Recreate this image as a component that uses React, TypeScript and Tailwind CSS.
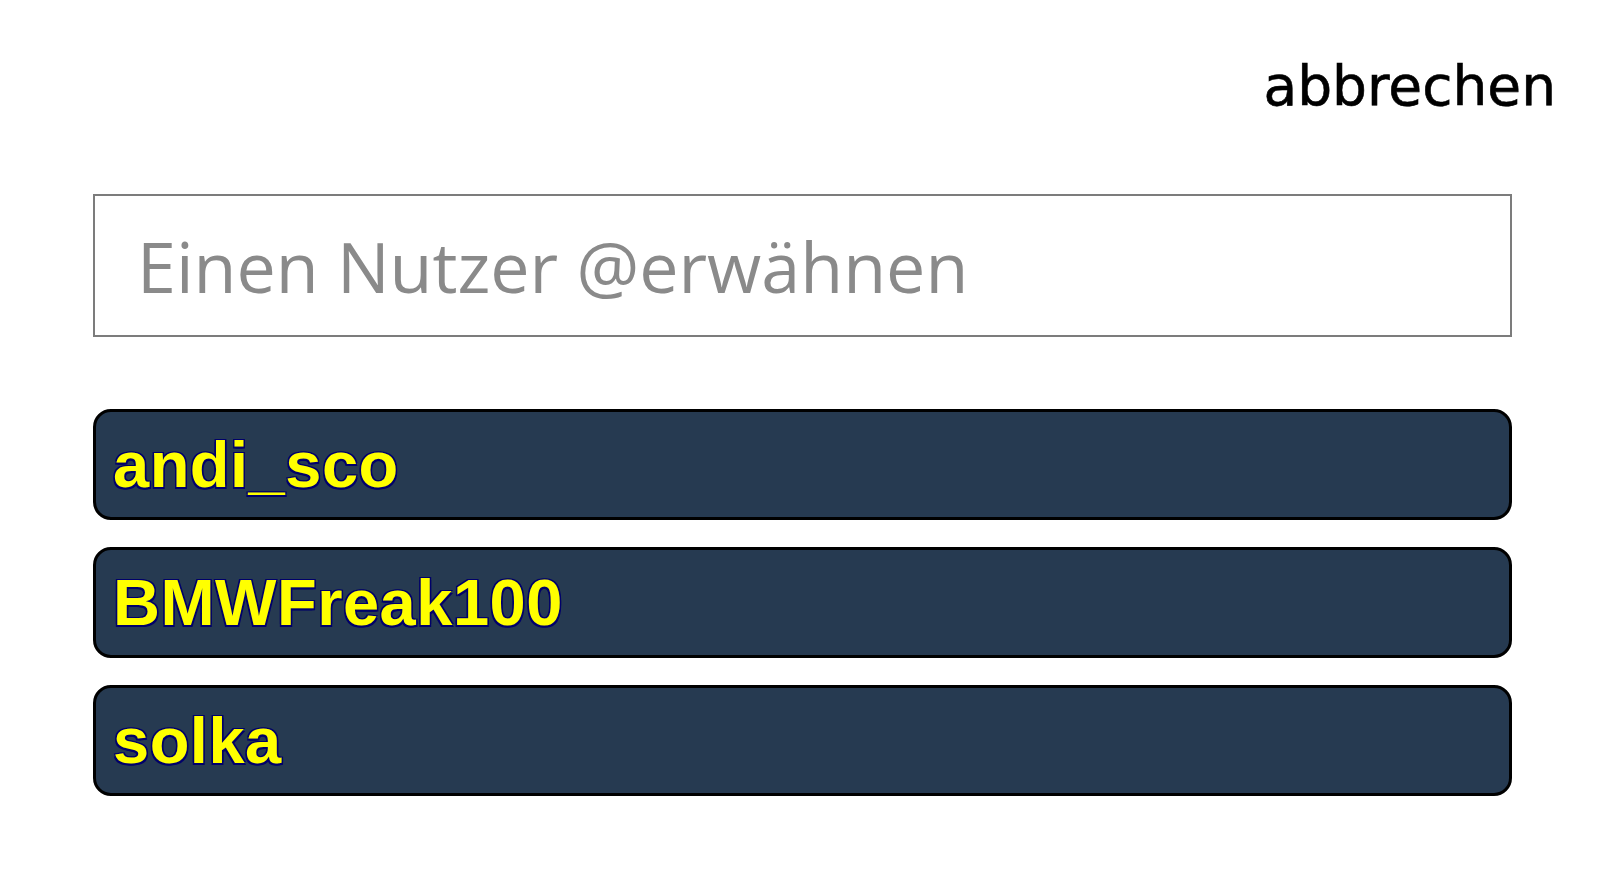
import { useState } from "react";

const USERS = ["andi_sco", "BMWFreak100", "solka"];

export default function App() {
  const [query, setQuery] = useState("");

  return (
    <div className="min-h-[875px] w-full bg-white">
      {/* cancel link */}
      <div className="flex justify-end pr-[44px] pt-[54px]">
        <button
          type="button"
          className="text-[55px] leading-[64px] text-black [-webkit-text-stroke:0.6px_#000]"
          style={{ fontFamily: '"DejaVu Sans", sans-serif' }}
        >
          abbrechen
        </button>
      </div>

      <div className="ml-[93px] mt-[76px] w-[1419px]">
        <input
          type="text"
          value={query}
          onChange={(e) => setQuery(e.target.value)}
          placeholder="Einen Nutzer @erwähnen"
          className="block h-[143px] w-full border-2 border-[#7c7c7c] bg-white px-[42px] text-[70px] text-[#555] outline-none placeholder:text-[#8a8a8a]"
          style={{ fontFamily: '"Open Sans", sans-serif', fontWeight: 500 }}
        />

        {/* suggestions */}
        <ul className="mt-[72px] flex flex-col gap-[27px]">
          {USERS.map((name) => (
            <li
              key={name}
              className="flex h-[111px] items-center rounded-[18px] border-[3px] border-black bg-[#263a51] pl-[17px] text-[65px] leading-none font-bold tracking-[0.5px] text-[#ffff00] [text-shadow:1.5px_1.5px_0_#00006a,-1.5px_-1.5px_0_#00006a,1.5px_-1.5px_0_#00006a,-1.5px_1.5px_0_#00006a,0_1.5px_0_#00006a,0_-1.5px_0_#00006a]"
              style={{ fontFamily: '"Liberation Sans", Arial, sans-serif' }}
            >
              {name}
            </li>
          ))}
        </ul>
      </div>
    </div>
  );
}
